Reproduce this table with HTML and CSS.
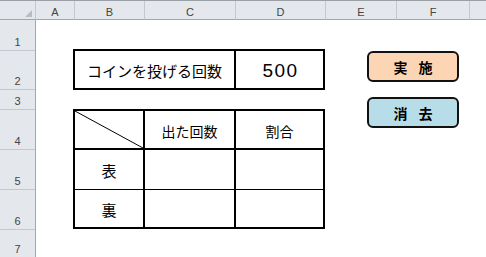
FILE: index.html
```html
<!DOCTYPE html>
<html lang="ja">
<head>
<meta charset="utf-8">
<title>コイン投げ</title>
<link rel="stylesheet" href="styles.css">
</head>
<body>
<div class="sheet">
  <div class="colheads">
    <div class="ch corner"><span class="tri"></span></div>
    <div class="ch ca">A</div>
    <div class="ch cb">B</div>
    <div class="ch cc">C</div>
    <div class="ch cd">D</div>
    <div class="ch ce">E</div>
    <div class="ch cf">F</div>
    <div class="ch cg"></div>
  </div>
  <div class="body">
    <div class="rowheads">
      <div class="rh r1">1</div>
      <div class="rh r2">2</div>
      <div class="rh r3">3</div>
      <div class="rh r4">4</div>
      <div class="rh r5">5</div>
      <div class="rh r6">6</div>
      <div class="rh r7">7</div>
    </div>
    <div class="canvas">
      <div class="left">
        <div class="box1">
          <div class="bcell label">コインを投げる回数</div>
          <div class="bcell value">500</div>
        </div>
        <div class="tbl">
          <div class="tc diag c1 h"><svg class="slash" viewBox="0 0 68 37" preserveAspectRatio="none"><line x1="0" y1="0" x2="68" y2="37" stroke="#000" stroke-width="1"/></svg></div>
          <div class="tc c2 h">出た回数</div>
          <div class="tc c3 h">割合</div>
          <div class="tc c1 m">表</div>
          <div class="tc c2 m"></div>
          <div class="tc c3 m"></div>
          <div class="tc c1 b">裏</div>
          <div class="tc c2 b"></div>
          <div class="tc c3 b"></div>
        </div>
      </div>
      <div class="buttons">
        <div class="btn run">実 施</div>
        <div class="btn clear">消 去</div>
      </div>
    </div>
  </div>
</div>
</body>
</html>
```
FILE: styles.css
```css
html, body {
  margin: 0;
  padding: 0;
  background: #fff;
}
body {
  width: 486px;
  height: 257px;
  overflow: hidden;
  font-family: "Noto Sans CJK JP", "Liberation Sans", sans-serif;
  color: #000;
}
.sheet {
  width: 486px;
  height: 257px;
  display: flex;
  flex-direction: column;
}
.colheads {
  display: flex;
  height: 20px;
  box-sizing: border-box;
  border-top: 1px solid #9a9fa6;
  background: #e4e7ec;
}
.ch {
  box-sizing: border-box;
  height: 19px;
  border-right: 1px solid #c4c8ce;
  border-bottom: 1px solid #a2a7ae;
  font-family: "Liberation Sans", sans-serif;
  font-size: 11px;
  color: #444;
  display: flex;
  align-items: center;
  justify-content: center;
  padding-top: 3px;
}
.corner { width: 36px; position: relative; }
.tri {
  position: absolute;
  right: 3px;
  bottom: 2px;
  width: 0;
  height: 0;
  border-left: 7px solid transparent;
  border-bottom: 7px solid #b9bdc3;
}
.ca { width: 39px; }
.cb { width: 70px; }
.cc { width: 91px; }
.cd { width: 90px; }
.ce { width: 71px; }
.cf { width: 73px; }
.cg { flex: 1; border-right: none; }

.body {
  flex: 1;
  display: flex;
}
.rowheads {
  width: 36px;
  box-sizing: border-box;
  border-right: 1px solid #a2a7ae;
  background: #e4e7ec;
  display: flex;
  flex-direction: column;
}
.rh {
  box-sizing: border-box;
  border-bottom: 1px solid #c4c8ce;
  font-family: "Liberation Sans", sans-serif;
  font-size: 11px;
  color: #444;
  display: flex;
  align-items: flex-end;
  justify-content: center;
  padding-bottom: 2px;
}
.r1 { height: 31px; }
.r2 { height: 39px; }
.r3 { height: 20px; }
.r4 { height: 40px; }
.r5 { height: 40px; }
.r6 { height: 40px; }
.r7 { flex: 1; border-bottom: none; }

.canvas {
  flex: 1;
  display: flex;
  align-items: flex-start;
  padding-left: 37px;
  padding-top: 29px;
}
.left {
  width: 252px;
  display: flex;
  flex-direction: column;
}
.box1 {
  box-sizing: border-box;
  height: 41px;
  border: 2px solid #000;
  display: grid;
  grid-template-columns: 161px 87px;
}
.bcell {
  display: flex;
  align-items: center;
  justify-content: center;
  box-sizing: border-box;
  padding-top: 2px;
}
.label {
  border-right: 2px solid #000;
  font-size: 15px;
}
.value {
  font-family: "Liberation Sans", sans-serif;
  font-size: 19px;
  letter-spacing: 1.5px;
  padding-left: 2px;
}
.tbl {
  margin-top: 19px;
  box-sizing: border-box;
  height: 120px;
  border: 2px solid #000;
  display: grid;
  grid-template-columns: 70px 91px 87px;
  grid-template-rows: 39px 40px 37px;
}
.tc {
  box-sizing: border-box;
  display: flex;
  align-items: center;
  justify-content: center;
  font-size: 14px;
  padding-top: 2px;
}
.c1, .c2 { border-right: 2px solid #000; }
.h { border-bottom: 2px solid #000; }
.m { border-bottom: 1px solid #000; }
.m.c1, .b.c1 { font-size: 15px; }
.diag { padding: 0; }
.slash {
  display: block;
  width: 100%;
  height: 100%;
}

.buttons {
  margin-left: 42px;
  margin-top: 2px;
  display: flex;
  flex-direction: column;
  gap: 15px;
}
.btn {
  box-sizing: border-box;
  width: 92px;
  height: 31px;
  border: 2px solid #111;
  border-radius: 6px;
  display: flex;
  align-items: center;
  justify-content: center;
  font-size: 14px;
  font-weight: bold;
  word-spacing: 8px;
  padding-top: 1px;
}
.run { background: #fcd5b4; }
.clear { background: #b7dde8; }
```
